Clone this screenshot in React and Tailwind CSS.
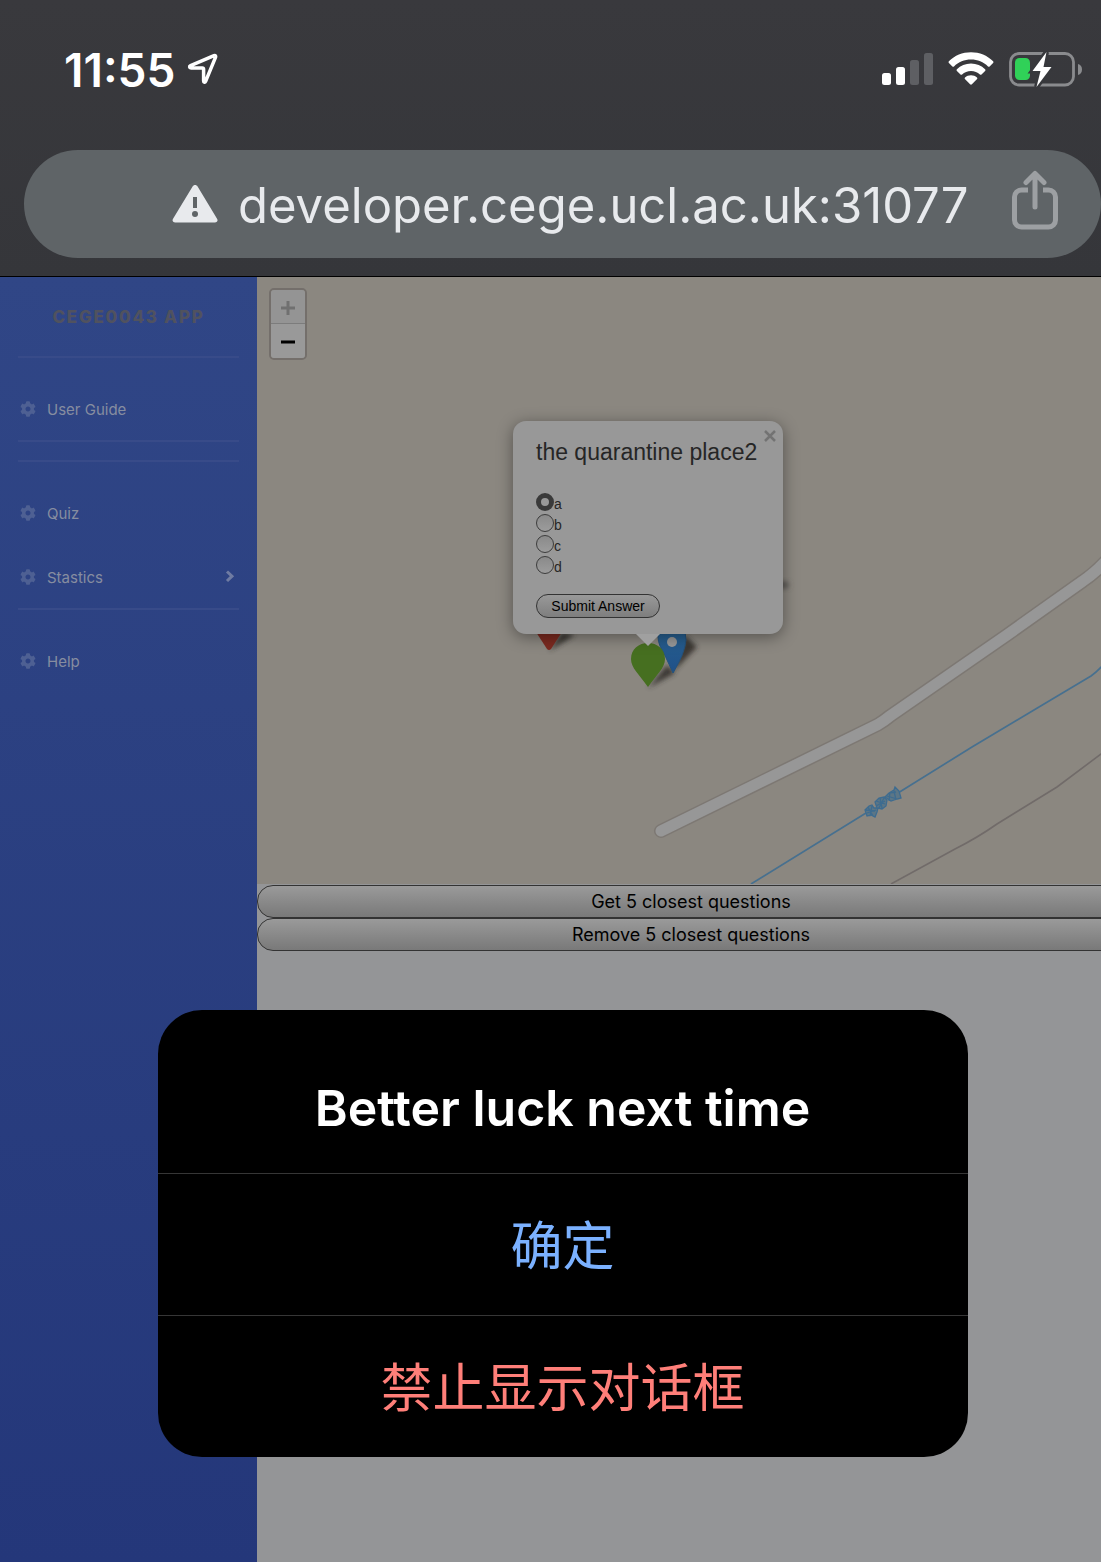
import React from "react";

function LocationArrow() {
  return (
    <svg width="32" height="34" viewBox="0 0 32 34" fill="none" aria-hidden="true">
      <path
        d="M3.6 13.6 27 3.6c1.300-.5 2 .2 1.600 1.500L18.600 29.300c-.6 1.400-2 1.200-2-.3V17.300c0-.9-.4-1.300-1.300-1.300H4C2.300 16 2.100 14.300 3.600 13.600Z"
        stroke="#fff"
        strokeWidth="3.500"
        strokeLinejoin="round"
      />
    </svg>
  );
}

function SignalBars() {
  return (
    <svg width="51" height="34" viewBox="0 0 51 34" aria-hidden="true">
      <rect x="0" y="21" width="9" height="12" rx="2.500" fill="#fff" />
      <rect x="14" y="15" width="9" height="18" rx="2.500" fill="#fff" />
      <rect x="28" y="8" width="9" height="25" rx="2.500" fill="#5e5f63" />
      <rect x="42" y="1" width="9" height="32" rx="2.500" fill="#5e5f63" />
    </svg>
  );
}

function Wifi() {
  return (
    <svg width="46" height="34" viewBox="0 0 46 34" fill="#fff" aria-hidden="true">
      <path d="M23 0.300C31.600.3 39.300 3.600 45.100 9.200c.5.5.5 1.200 0 1.700l-3.500 3.500c-.4.400-1.100.4-1.600 0C35.500 10.200 29.600 7.600 23 7.600S10.500 10.200 6 14.400c-.5.4-1.200.4-1.600 0L.9 10.900c-.5-.5-.5-1.200 0-1.700C6.700 3.600 14.400.3 23 .3Z" />
      <path d="M23 11.600c5.500 0 10.400 2.100 14.100 5.600.5.500.5 1.200 0 1.700l-3.600 3.500c-.4.400-1.100.4-1.600 0-2.300-2.100-5.400-3.400-8.900-3.400s-6.600 1.300-8.900 3.400c-.5.400-1.200.4-1.600 0l-3.600-3.500c-.5-.5-.5-1.200 0-1.700 3.700-3.500 8.600-5.600 14.100-5.600Z" />
      <path d="M23 23.200c2.300 0 4.400.8 6 2.200.5.500.5 1.100.1 1.600l-5.200 5.300c-.5.600-1.300.6-1.800 0L16.900 27c-.4-.5-.4-1.100.1-1.600 1.600-1.400 3.700-2.200 6-2.200Z" />
    </svg>
  );
}

function Battery() {
  return (
    <svg width="73" height="36" viewBox="0 0 73 36" fill="none" aria-hidden="true">
      <rect x="1.500" y="2.500" width="63" height="31.500" rx="8.500" stroke="#8a8b8e" strokeWidth="2.800" />
      <path d="M69 13c2.700.9 4 2.700 4 5.500s-1.300 4.600-4 5.500Z" fill="#8a8b8e" />
      <rect x="6" y="7" width="15" height="22" rx="4.500" fill="#30d158" />
      <path d="M37.500 1 23.500 20h8L27.500 36 42.500 16h-8Z" fill="#fff" stroke="#37383c" strokeWidth="5" paintOrder="stroke" />
    </svg>
  );
}

function Warning() {
  return (
    <svg width="46" height="38" viewBox="0 0 46 38" aria-hidden="true">
      <path d="M20.600 1.600c1.200-2 3.800-2 5 0l19.300 31.800c1.400 2.100.5 4.100-2 4.100H3.200c-2.500 0-3.400-2-2-4.100Z" fill="#e8eaed" />
      <rect x="21" y="12" width="4" height="11" fill="#5f6467" />
      <circle cx="23" cy="29" r="3" fill="#5f6467" />
    </svg>
  );
}

function Share() {
  return (
    <svg width="46" height="60" viewBox="0 0 46 60" fill="none" stroke="#9da0a3" strokeWidth="5" aria-hidden="true">
      <path d="M16 20H9.500a7 7 0 0 0-7 7v23a7 7 0 0 0 7 7h27a7 7 0 0 0 7-7V27a7 7 0 0 0-7-7H31" />
      <path d="M23 37V4M14 12.500l9-9 9 9" strokeLinecap="round" strokeLinejoin="round" />
    </svg>
  );
}

function Gear() {
  return (
    <svg className="size-4 shrink-0" viewBox="0 0 512 512" fill="#4e6093" aria-hidden="true">
      <path d="M487.400 315.700l-42.600-24.600c4.300-23.200 4.300-47 0-70.200l42.600-24.600c4.900-2.800 7.100-8.600 5.500-14-11.100-35.600-30-67.800-54.700-94.600-3.800-4.100-10-5.100-14.800-2.300L380.800 110c-17.900-15.400-38.500-27.300-60.800-35.100V25.800c0-5.600-3.900-10.500-9.400-11.700-36.700-8.200-74.300-7.800-109.200 0-5.500 1.200-9.400 6.100-9.400 11.700V75c-22.200 7.900-42.800 19.800-60.800 35.100L88.700 85.500c-4.900-2.800-11-1.900-14.800 2.300-24.700 26.700-43.600 58.900-54.700 94.600-1.700 5.400.6 11.200 5.500 14L67.300 221c-4.300 23.200-4.300 47 0 70.200l-42.600 24.600c-4.900 2.800-7.100 8.600-5.500 14 11.100 35.600 30 67.800 54.700 94.600 3.800 4.100 10 5.100 14.800 2.300l42.600-24.600c17.900 15.400 38.500 27.300 60.800 35.100v49.200c0 5.600 3.900 10.500 9.400 11.700 36.700 8.200 74.300 7.800 109.200 0 5.500-1.200 9.400-6.100 9.400-11.700v-49.200c22.200-7.900 42.800-19.800 60.800-35.100l42.600 24.600c4.900 2.800 11 1.900 14.800-2.300 24.700-26.700 43.600-58.900 54.700-94.600 1.500-5.500-.7-11.300-5.600-14.100zM256 336c-44.100 0-80-35.900-80-80s35.900-80 80-80 80 35.900 80 80-35.900 80-80 80z" />
    </svg>
  );
}

function NavItem({ label, chevron }) {
  return (
    <a href="#" className="flex h-16 items-center pr-[22px] pb-0.5 pl-5 text-[15px] text-[#868da0]">
      <Gear />
      <span className="ml-[11px] grow pt-0.5">{label}</span>
      {chevron && (
        <svg width="10" height="14" viewBox="0 0 10 14" fill="none" aria-hidden="true">
          <path d="M2 1.500 7 6.200 2 11" stroke="#6f7ba2" strokeWidth="3" />
        </svg>
      )}
    </a>
  );
}

function Divider() {
  return <hr className="mx-[18px] border-t-2 border-[#384b89]" />;
}

function Sidebar() {
  return (
    <nav className="w-[257px] shrink-0 bg-linear-to-b from-[#304686] to-[#24377a]">
      <h1 className="flex h-[79px] items-center justify-center pt-0.5 text-[17px] font-extrabold tracking-widest text-[#50525f]">
        CEGE0043 APP
      </h1>
      <Divider />
      <div className="pt-5">
        <NavItem label="User Guide" />
      </div>
      <div className="-mt-0.5">
        <Divider />
      </div>
      <div className="mt-[18px]">
        <Divider />
      </div>
      <div className="pt-5">
        <NavItem label="Quiz" />
        <NavItem label="Stastics" chevron />
      </div>
      <div className="-mt-0.5">
        <Divider />
      </div>
      <div className="pt-5">
        <NavItem label="Help" />
      </div>
    </nav>
  );
}

function MapDrawing() {
  return (
    <svg className="absolute inset-0 h-full w-full" fill="none" aria-hidden="true">
      <defs>
        <filter id="soft" x="-50%" y="-50%" width="200%" height="200%">
          <feGaussianBlur stdDeviation="2.500" />
        </filter>
        <linearGradient id="blue" x1="0" y1="0" x2="0" y2="1">
          <stop offset="0" stopColor="#2a6492" />
          <stop offset="1" stopColor="#1f5088" />
        </linearGradient>
      </defs>
      <path d="M404 554 621 447.500Q627 444 633 439L750 358 826 304Q838 296 850 283" stroke="#7d7873" strokeWidth="14" strokeLinecap="round" strokeLinejoin="round" />
      <path d="M404 554 621 447.500Q627 444 633 439L750 358 826 304Q838 296 850 283" stroke="#979797" strokeWidth="11" strokeLinecap="round" strokeLinejoin="round" />
      <path d="M494 607 609 536M641 516 715 470 782 430 834 399Q840 395 848 386" stroke="#47708f" strokeWidth="1.700" />
      <g stroke="#3e6c90" strokeWidth="1.300">
        <path d="M608 533l4-4 3-1 2 3 4 0-1 4-2 5-4-2-4 1-1-3ZM609 533l9 1M610 536l9-3M611 530l5 9M615 529l-2 10" fill="#5c7686" />
        <path d="M618 525l4-4 5-1 3 3-1 6-4 3-5-1ZM619 524l9 3M619 529l9-5M623 521l2 10M627 521l-5 10" fill="#5c7686" />
        <path d="M628 520l4-4 5-3 1-3 4 4 2 7-4 1-6 2-3-2ZM630 519l10 3M632 516l7-1M633 515l-1 9M637 514l2 9" fill="#5c7686" />
      </g>
      <path d="M634 607 698 572Q720 561 740 547L800 510 848 474" stroke="#716b69" strokeWidth="1.600" />
      <ellipse cx="526" cy="308" rx="6" ry="4" fill="#5b5854" filter="url(#soft)" />
      <g fill="#2d2b28" opacity=".85" filter="url(#soft)">
        <path d="M292 374 318 358 305 355Z" />
        <path d="M416 395 440 370 428 358Z" />
        <path d="M391 411 418 396 410 388Z" />
      </g>
      <path d="M279 355h26l-11 17q-2 2-4 0Z" fill="#7c2a20" />
      <path d="M408 356h14v12h-10Z" fill="#984f91" />
      <path d="M401 360q0-14 14-14t14 17q-1 13-13 33-8-18-13-27-2-5-2-9Z" fill="url(#blue)" stroke="#24527c" />
      <circle cx="415" cy="365" r="5" fill="#999" />
      <path d="M374 382c0-10 8-16 17-16s17 6 17 16c0 9-8 15-17 28-9-13-17-19-17-28Z" fill="#466f20" />
    </svg>
  );
}

function ZoomControl() {
  return (
    <div className="absolute top-[11px] left-3 flex w-[38px] flex-col overflow-hidden rounded-[5px] border-2 border-[#746f6b] font-bold">
      <button aria-label="Zoom in" className="flex h-[34px] items-center justify-center border-b border-[#7c7c7c] bg-[#949494] pt-0.5">
        <svg width="14" height="14" viewBox="0 0 14 14" stroke="#707070" strokeWidth="3" aria-hidden="true">
          <path d="M0 7h14M7 0v14" />
        </svg>
      </button>
      <button aria-label="Zoom out" className="flex h-[34px] items-center justify-center bg-[#999] pt-0.5">
        <svg width="14" height="14" viewBox="0 0 14 14" stroke="#000" strokeWidth="3" aria-hidden="true">
          <path d="M0 7h14" />
        </svg>
      </button>
    </div>
  );
}

function QuestionPopup() {
  return (
    <div className="absolute top-36 left-64 w-[270px] font-['Liberation_Sans',sans-serif]">
      <div className="relative rounded-[13px] bg-[#989898] px-[23px] pt-[15px] pb-4 text-[#262626] shadow-[0_3px_16px_rgba(0,0,0,0.4)]">
        <button aria-label="Close" className="absolute top-2 right-1.5">
          <svg width="14" height="14" viewBox="0 0 14 14" stroke="#737373" strokeWidth="2.500" aria-hidden="true">
            <path d="M2 2l10 10M12 2 2 12" />
          </svg>
        </button>
        <h2 className="text-[23px] leading-8 whitespace-nowrap">the quarantine place2</h2>
        <div className="mt-[25px] text-sm leading-5">
          {["a", "b", "c", "d"].map((option) => (
            <label key={option} className="flex h-[21px]">
              <input
                type="radio"
                name="answer"
                defaultChecked={option === "a"}
                className="size-[18px] shrink-0 appearance-none rounded-full border border-[#3c3c3c] bg-linear-to-b from-[#8a8a8a] to-[#9c9c9c] checked:border-[5px] checked:border-[#3a3a3a] checked:bg-[#999] checked:bg-none"
              />
              <span className="pt-px">{option}</span>
            </label>
          ))}
        </div>
        <button className="mt-[17px] h-6 w-[124px] rounded-full border border-[#333] bg-linear-to-b from-[#999] to-[#7e7e7e] text-sm text-black">
          Submit Answer
        </button>
      </div>
      <svg className="relative mx-auto block" width="24" height="12" viewBox="0 0 24 12" aria-hidden="true">
        <path d="M0 0h24L12 12Z" fill="#a0a0a0" />
      </svg>
    </div>
  );
}

function ActionButton({ children }) {
  return (
    <button className="h-[33px] rounded-[16px] border border-[#333] bg-linear-to-b from-[#9a9a9a] to-[#797979] text-lg text-black">
      {children}
    </button>
  );
}

function Alert() {
  return (
    <div className="absolute inset-0 flex items-end justify-center pb-[105px] pl-6">
      <div role="alertdialog" aria-labelledby="alert-title" className="flex w-[810px] flex-col overflow-hidden rounded-[44px] bg-black text-[52px]">
        <h2 id="alert-title" className="px-10 pt-[66px] pb-[33px] text-center text-[50px] leading-[64px] font-semibold text-white">
          Better luck next time
        </h2>
        <button className="h-[142px] border-t border-[#363636] pt-1 text-[#7bb1ff]">确定</button>
        <button className="h-[142px] border-t border-[#363636] pt-1 text-[#ff7f79]">禁止显示对话框</button>
      </div>
    </div>
  );
}

export default function App() {
  return (
    <div className="flex min-h-screen flex-col overflow-hidden bg-[#949597] font-[Inter,'Noto_Sans_CJK_SC',sans-serif]">
      <header className="border-b border-black bg-linear-to-b from-[#39393d] to-[#35363a] pb-[18px]">
        <div className="flex h-[150px] items-center pr-[19px] pb-3 pl-16 text-white">
          <time className="pt-0.5 text-[46px] font-semibold">11:55</time>
          <span className="ml-3">
            <LocationArrow />
          </span>
          <div className="ml-auto flex items-center gap-[15px]">
            <SignalBars />
            <Wifi />
            <Battery />
          </div>
        </div>
        <div className="ml-6 flex h-[108px] items-center rounded-full bg-[#5f6467] pr-[43px] pl-[148px]">
          <Warning />
          <span className="ml-5 grow pt-1 text-[49px] text-[#e8eaed]">developer.cege.ucl.ac.uk:31077</span>
          <button aria-label="Share" className="pb-2">
            <Share />
          </button>
        </div>
      </header>
      <div className="relative flex grow">
        <Sidebar />
        <main className="-mr-6 flex min-w-0 grow flex-col">
          <div className="relative h-[607px] overflow-hidden bg-[#8b8780]">
            <MapDrawing />
            <ZoomControl />
            <QuestionPopup />
          </div>
          <div className="flex flex-col pt-px">
            <ActionButton>Get 5 closest questions</ActionButton>
            <ActionButton>Remove 5 closest questions</ActionButton>
          </div>
        </main>
        <Alert />
      </div>
    </div>
  );
}
